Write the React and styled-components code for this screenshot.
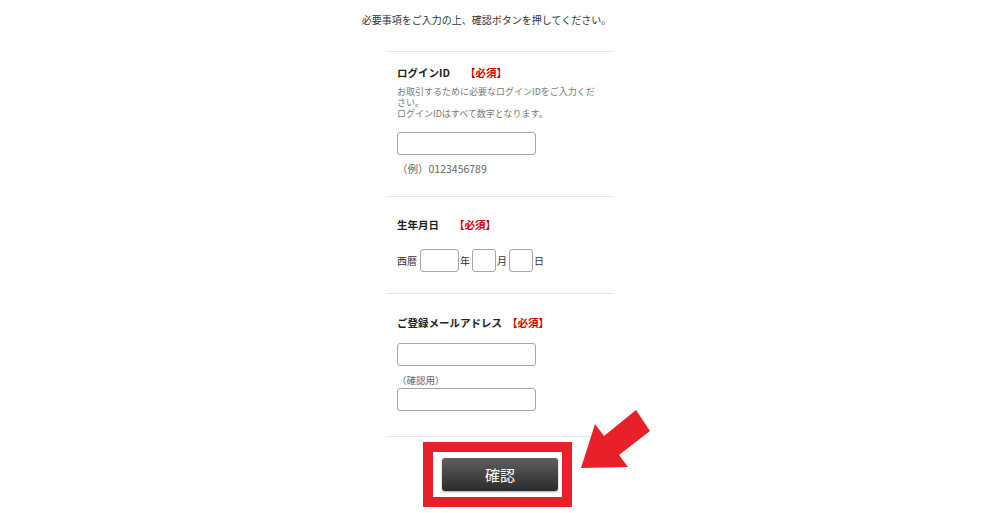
import React from 'react'
import styled, { createGlobalStyle } from 'styled-components'

const GlobalStyle = createGlobalStyle`
  html, body {
    margin: 0;
    padding: 0;
    background: #fff;
  }
  body {
    font-family: "Noto Sans CJK JP", "Noto Sans", sans-serif;
    color: #333;
  }
`

const Page = styled.div`
  position: relative;
  width: 1000px;
  height: 513px;
  overflow: hidden;
  background: #fff;
`

const Lead = styled.p`
  margin: 0;
  padding: 13px 27px 0 0;
  font-size: 10px;
  line-height: 14px;
  text-align: center;
  color: #333;
`

const Column = styled.div`
  width: 228px;
  margin: 24px auto 0;
`

const Section = styled.section`
  border-top: 1px solid #e6e6e6;
  padding: ${p => p.$top}px 11px ${p => p.$bottom}px;
  &:last-of-type {
    border-bottom: 1px solid #e6e6e6;
  }
`

const Heading = styled.h3`
  margin: 0;
  font-size: 10.5px;
  line-height: 14px;
  font-weight: 600;
  color: #222;
`

const Required = styled.span`
  margin-left: ${p => p.$gap}px;
  color: #cc0000;
`

const Note = styled.p`
  margin: ${p => p.$mt || 0}px 0 0;
  width: 206px;
  font-size: 9px;
  line-height: 11px;
  color: #777;
`

const Example = styled.p`
  margin: ${p => p.$mt || 0}px 0 0;
  font-size: ${p => p.$size || 9.5}px;
  line-height: 12px;
  color: #666;
`

const TextInput = styled.input`
  display: block;
  box-sizing: border-box;
  width: ${p => p.$w || 139}px;
  height: 23px;
  margin: ${p => p.$mt || 0}px 0 0;
  padding: 0 4px;
  border: 1px solid #a6a6a6;
  border-radius: 3px;
  background: #fff;
  outline: none;
  font-size: 10px;
`

const DateRow = styled.div`
  display: flex;
  align-items: center;
  margin-top: 17px;
  font-size: 10px;
  line-height: 12px;
  color: #333;
`

const DateInput = styled(TextInput)`
  display: inline-block;
  margin: 0 1px 0 ${p => p.$left}px;
`

const Footer = styled.div`
  display: flex;
  justify-content: center;
  padding-top: 5px;
`

const Frame = styled.div`
  border: 10px solid #e8202a;
  padding: 6px 4px 6px 9px;
  margin-left: -5px;
  background: #fff;
`

const Button = styled.button`
  display: block;
  width: 116px;
  height: 33px;
  border: none;
  border-radius: 3px;
  background: linear-gradient(#5e5e5e, #2c2c2c);
  box-shadow: 0 1px 2px rgba(0, 0, 0, 0.35);
  color: #fff;
  font-family: "Noto Sans CJK JP", sans-serif;
  font-size: 15px;
  cursor: pointer;
`

const Arrow = styled.svg`
  position: absolute;
  left: 0;
  top: 0;
  pointer-events: none;
`

const App = () => {
  return (
    <Page>
      <GlobalStyle />
      <Lead>必要事項をご入力の上、確認ボタンを押してください。</Lead>
      <Column>
        <Section $top={14} $bottom={21}>
          <Heading>
            ログインID<Required $gap={15}>【必須】</Required>
          </Heading>
          <Note $mt={6}>
            お取引するために必要なログインIDをご入力ください。
            <br />
            ログインIDはすべて数字となります。
          </Note>
          <TextInput $mt={13} />
          <Example $mt={8} $size={10.5}>（例）0123456789</Example>
        </Section>
        <Section $top={21} $bottom={21}>
          <Heading>
            生年月日<Required $gap={15}>【必須】</Required>
          </Heading>
          <DateRow>
            <span>西暦</span>
            <DateInput $w={39} $left={3} />
            <span>年</span>
            <DateInput $w={24} $left={2} />
            <span>月</span>
            <DateInput $w={24} $left={2} />
            <span>日</span>
          </DateRow>
        </Section>
        <Section $top={22} $bottom={25}>
          <Heading>
            ご登録メールアドレス<Required $gap={5}>【必須】</Required>
          </Heading>
          <TextInput $mt={13} />
          <Example $mt={8}>（確認用）</Example>
          <TextInput $mt={2} />
        </Section>
      </Column>
      <Footer>
        <Frame>
          <Button>確認</Button>
        </Frame>
      </Footer>
      <Arrow width="1000" height="513" viewBox="0 0 1000 513">
        <polygon
          fill="#e8202a"
          points="581,468 595,424 604,436 636,410 650,431 619,455 628,467"
        />
      </Arrow>
    </Page>
  )
}

export default App
